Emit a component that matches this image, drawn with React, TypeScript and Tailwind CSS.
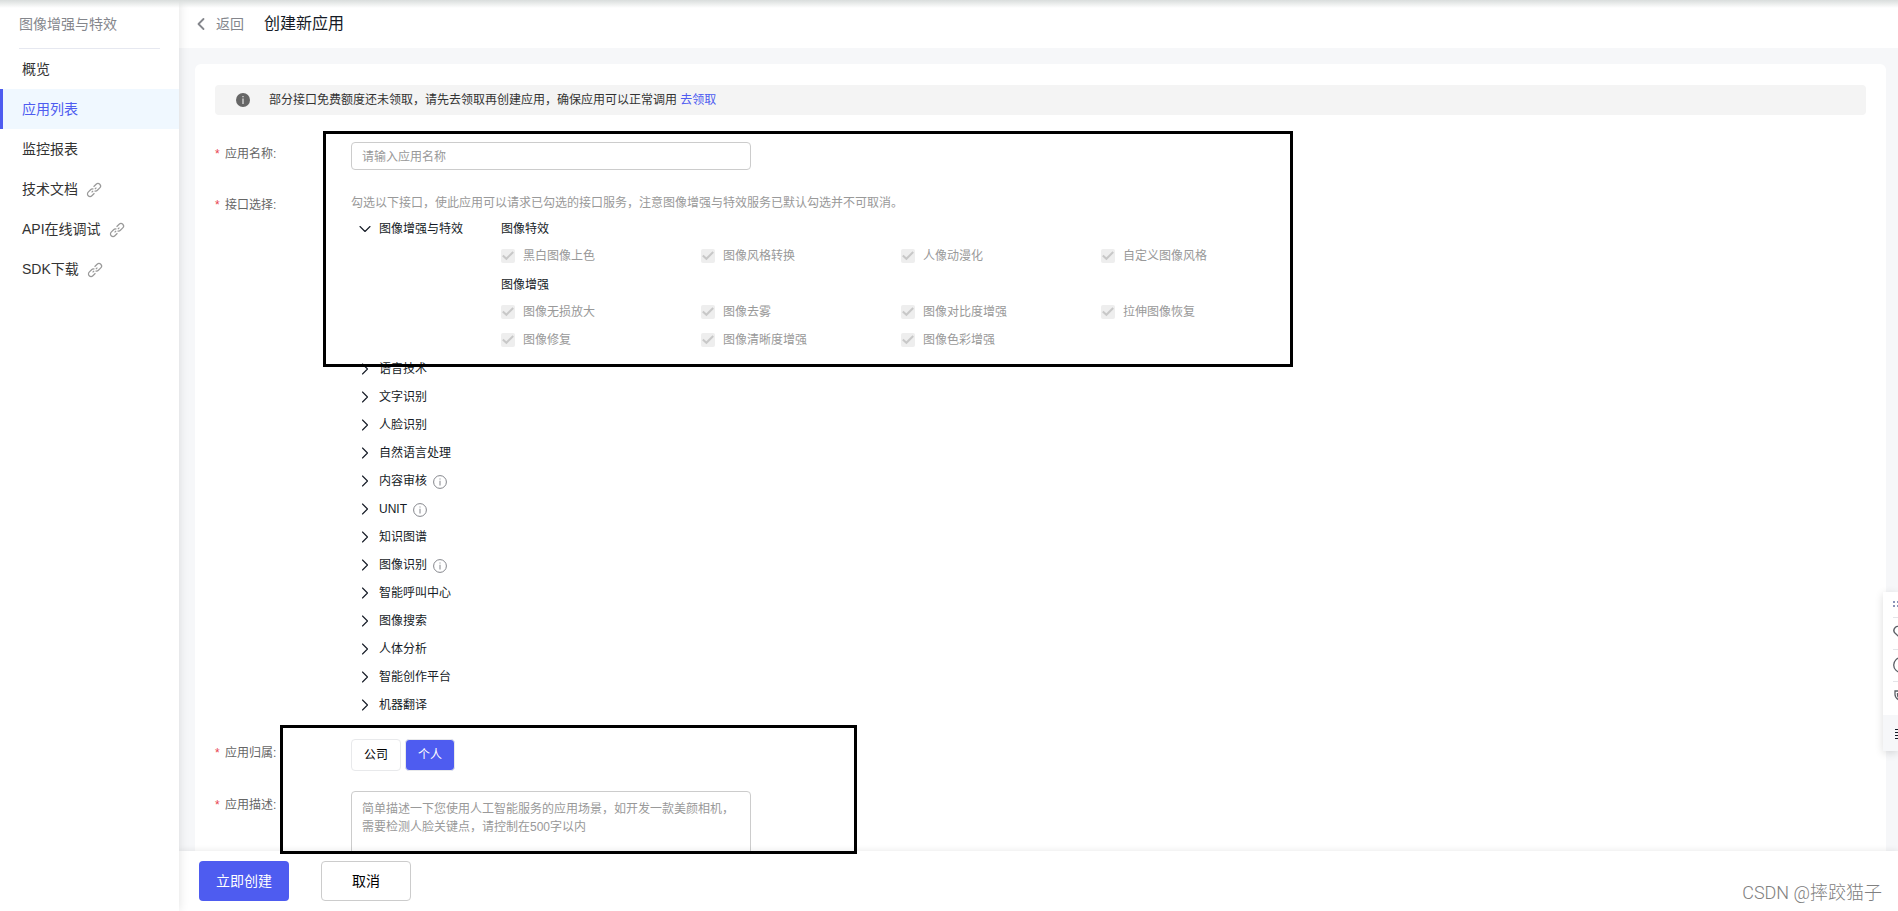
import { useState, type ReactNode } from 'react'
import { ChevronDown, ChevronLeft, ChevronRight } from 'lucide-react'
import clsx from 'clsx'

const menu = [
  { label: '概览' },
  { label: '应用列表', active: true },
  { label: '监控报表' },
  { label: '技术文档', external: true },
  { label: 'API在线调试', external: true },
  { label: 'SDK下载', external: true },
]

const effectGroups = [
  {
    title: '图像特效',
    items: ['黑白图像上色', '图像风格转换', '人像动漫化', '自定义图像风格'],
  },
  {
    title: '图像增强',
    items: [
      '图像无损放大',
      '图像去雾',
      '图像对比度增强',
      '拉伸图像恢复',
      '图像修复',
      '图像清晰度增强',
      '图像色彩增强',
    ],
  },
]

const services = [
  { label: '语音技术' },
  { label: '文字识别' },
  { label: '人脸识别' },
  { label: '自然语言处理' },
  { label: '内容审核', info: true },
  { label: 'UNIT', info: true },
  { label: '知识图谱' },
  { label: '图像识别', info: true },
  { label: '智能呼叫中心' },
  { label: '图像搜索' },
  { label: '人体分析' },
  { label: '智能创作平台' },
  { label: '机器翻译' },
]

export default function App() {
  return (
    <div className="relative flex h-screen overflow-hidden bg-[#f6f7f9] font-['Liberation_Sans','Noto_Sans_CJK_SC',sans-serif] text-xs text-[#151b26]">
      <Sidebar />
      <div className="flex min-w-0 flex-1 flex-col">
        <header className="flex h-12 shrink-0 items-center bg-white pb-2 pl-3 pt-2">
          <a href="#" className="flex items-center text-sm text-[#84868c]">
            <ChevronLeft size={20} strokeWidth={2.2} className="mr-[5px]" />
            返回
          </a>
          <h1 className="ml-5 text-base">创建新应用</h1>
        </header>
        <main className="min-h-0 flex-1 overflow-y-auto px-4 pr-3 pt-4 [scrollbar-width:none]">
          <CreateForm />
        </main>
        <footer className="relative flex h-[60px] shrink-0 items-center gap-8 bg-white pl-5 text-sm shadow-[0_-1px_6px_rgba(0,0,0,0.08)]">
          <button type="submit" form="create-app" className="h-10 w-[90px] rounded bg-[#4e5cf0] text-white">
            立即创建
          </button>
          <button type="button" className="h-10 w-[90px] rounded border border-[#ccc] bg-white text-black">
            取消
          </button>
        </footer>
      </div>

      <FloatingTools />

      {/* shadow of the console top bar */}
      <div className="pointer-events-none absolute inset-x-0 top-0 z-20 h-2 bg-linear-to-b from-[#d9dddc] to-transparent" />

      {/* highlighted areas */}
      <div className="pointer-events-none absolute left-[323px] top-[131px] z-20 h-[236px] w-[970px] border-3 border-black" />
      <div className="pointer-events-none absolute left-[280px] top-[725px] z-20 h-[129px] w-[577px] border-3 border-black" />

      <span className="absolute bottom-1 right-4 z-20 font-['Roboto','Noto_Sans_CJK_SC',sans-serif] text-lg font-light text-[#808080]">
        CSDN @摔跤猫子
      </span>
    </div>
  )
}

function Sidebar() {
  return (
    <aside className="z-10 w-[179px] shrink-0 bg-white shadow-[0_0_10px_rgba(0,0,0,0.12)]">
      <h2 className="mx-[19px] h-[49px] border-b border-[#e6e8f0] pt-3.5 text-sm text-[#84868c]">
        图像增强与特效
      </h2>
      <nav className="text-sm">
        {menu.map((item) => (
          <a
            key={item.label}
            href="#"
            className={clsx(
              'flex h-10 items-center border-l-3 pl-[19px]',
              item.active
                ? 'border-[#4e5cf0] bg-[#f0f8ff] text-[#4e5cf0]'
                : 'border-transparent text-[#333]'
            )}
          >
            {item.label}
            {item.external && <LinkIcon />}
          </a>
        ))}
      </nav>
    </aside>
  )
}

function CreateForm() {
  const [owner, setOwner] = useState('个人')

  return (
    <form id="create-app" className="rounded-md bg-white px-5 pb-10 pt-[21px]">
      <div className="flex h-[30px] items-center rounded bg-[#f4f4f4] pl-[21px] text-[#333]">
        <svg width="14" height="14" viewBox="0 0 14 14" className="mr-[19px]">
          <circle cx="7" cy="7" r="7" fill="#666" />
          <path d="M6.5 3h1v1.3h-1zM6.5 5.5h1V11h-1z" fill="#fff" />
        </svg>
        <p>
          部分接口免费额度还未领取，请先去领取再创建应用，确保应用可以正常调用{' '}
          <a href="#" className="text-[#4e5cf0]">
            去领取
          </a>
        </p>
      </div>

      <div className="mt-[27px] flex">
        <FieldLabel htmlFor="app-name">应用名称:</FieldLabel>
        <input
          id="app-name"
          placeholder="请输入应用名称"
          className="h-7 w-[400px] rounded border border-[#ccc] px-2.5 pt-0.5 placeholder:text-[#999]"
        />
      </div>

      <div className="mt-[23px] flex">
        <FieldLabel>接口选择:</FieldLabel>
        <div>
          <p className="mb-0.5 h-5 leading-5 text-[#999]">
            勾选以下接口，使此应用可以请求已勾选的接口服务，注意图像增强与特效服务已默认勾选并不可取消。
          </p>
          <div className="flex">
            <div className="w-[150px]">
              <TreeButton label="图像增强与特效" open />
            </div>
            <div>
              {effectGroups.map((group) => (
                <fieldset key={group.title}>
                  <legend className="h-7 leading-7">{group.title}</legend>
                  <div className="grid grid-cols-[repeat(4,200px)]">
                    {group.items.map((name) => (
                      <LockedCheckbox key={name} label={name} />
                    ))}
                  </div>
                </fieldset>
              ))}
            </div>
          </div>
          {services.map((s) => (
            <TreeButton key={s.label} label={s.label} info={s.info} />
          ))}
        </div>
      </div>

      <div className="mt-5 flex">
        <FieldLabel low>应用归属:</FieldLabel>
        <div className="flex gap-1">
          {['公司', '个人'].map((name) => (
            <button
              key={name}
              type="button"
              aria-pressed={owner === name}
              onClick={() => setOwner(name)}
              className={clsx(
                'h-8 w-[50px] rounded border border-[#e8e9eb]',
                owner === name ? 'bg-[#4e5cf0] text-white' : 'bg-white text-black'
              )}
            >
              {name}
            </button>
          ))}
        </div>
      </div>

      <div className="mt-5 flex">
        <FieldLabel htmlFor="app-desc" low>
          应用描述:
        </FieldLabel>
        <textarea
          id="app-desc"
          placeholder="简单描述一下您使用人工智能服务的应用场景，如开发一款美颜相机，需要检测人脸关键点，请控制在500字以内"
          className="h-[110px] w-[400px] resize-none rounded border border-[#ccc] px-2.5 py-2 leading-[18px] placeholder:text-[#999]"
        />
      </div>
    </form>
  )
}

function FieldLabel({
  htmlFor,
  low,
  children,
}: {
  htmlFor?: string
  low?: boolean
  children: ReactNode
}) {
  return (
    <label
      htmlFor={htmlFor}
      className={clsx(
        'flex w-[136px] shrink-0 leading-[18px] text-[#666]',
        low ? 'pt-[5px]' : 'pt-[3px]'
      )}
    >
      <span className="w-2.5 text-[#e8434f]">*</span>
      {children}
    </label>
  )
}

function TreeButton({ label, open, info }: { label: string; open?: boolean; info?: boolean }) {
  const Chevron = open ? ChevronDown : ChevronRight
  return (
    <button type="button" aria-expanded={!!open} className="flex h-7 items-center pl-1">
      <Chevron size={20} strokeWidth={1.3} className="mr-1" />
      {label}
      {info && (
        <svg width="14" height="14" viewBox="0 0 14 14" className="ml-1.5 mt-0.5">
          <circle cx="7" cy="7" r="6.4" fill="none" stroke="#84868c" />
          <path d="M6.5 3.4h1v1.2h-1zM6.5 5.8h1v4.8h-1z" fill="#84868c" />
        </svg>
      )}
    </button>
  )
}

function LockedCheckbox({ label }: { label: string }) {
  return (
    <label className="flex h-7 items-center gap-2 pb-0.5 text-[#999]">
      <span className="grid size-3.5">
        <input
          type="checkbox"
          defaultChecked
          disabled
          className="col-start-1 row-start-1 size-3.5 appearance-none rounded-xs bg-[#eee]"
        />
        <svg viewBox="0 0 14 14" className="col-start-1 row-start-1 size-3.5">
          <path d="M1.8 6.4 5.4 9.8 12.2 3" fill="none" stroke="#c8c8c8" strokeWidth="2" />
        </svg>
      </span>
      {label}
    </label>
  )
}

function LinkIcon() {
  return (
    <svg
      width="14"
      height="14"
      viewBox="0 0 14 14"
      fill="none"
      stroke="#999"
      strokeWidth="1.2"
      className="ml-[9px] mt-0.5 overflow-visible"
    >
      <g transform="rotate(-45 7 7)">
        <path d="M5 9.6H1.4a2.6 2.6 0 0 1 0-5.2h3.4a2.6 2.6 0 0 1 2.400 1.6" />
        <path d="M9 4.4h3.6a2.6 2.6 0 0 1 0 5.2H9.200A2.6 2.6 0 0 1 6.800 8" />
        <path d="M3.600 7h2.200M8.200 7h2.200" />
      </g>
    </svg>
  )
}

// Tool strip docked past the right edge, only its left side shows.
function FloatingTools() {
  return (
    <div className="absolute right-0 top-[592px] z-10 h-[159px] w-[15px] bg-white shadow-[0_2px_8px_rgba(0,0,0,0.14)]">
      <div className="h-full overflow-hidden pl-2.5">
        <div className="h-[25px] pt-[9px]">
          <svg width="16" height="6" fill="#8a93b8" className="max-w-none">
            <path d="M0 0h2v2H0zM4 0h2v2H4zM0 4h2v2H0zM4 4h2v2H4z" />
          </svg>
        </div>
        <ToolRow>
          <path d="M8 3.2C6.5 1.1 3.8.9 2.2 2.5.5 4.2.5 6.6 2.2 8.3L8 13.5l5.8-5.2c1.7-1.7 1.7-4.1 0-5.8C12.2.9 9.5 1.1 8 3.2z" />
        </ToolRow>
        <ToolRow>
          <circle cx="8" cy="8" r="7.3" />
        </ToolRow>
        <ToolRow>
          <path d="M2 2h12v3.5c0 3-2.500 5-6 6.500-3.500-1.500-6-3.500-6-6.500zM4.500 4v2c0 2 1.500 3 3.500 4" />
        </ToolRow>
        <div className="-ml-2.5 mt-0.5 h-9 bg-[#f6f7f9] pl-3 pt-3.5">
          <svg width="16" height="11" fill="#151b26" className="max-w-none">
            <path d="M0 0h14v1H0zM0 3h14v1H0zM0 6h14v1H0zM0 9h14v1H0z" />
          </svg>
        </div>
      </div>
    </div>
  )
}

function ToolRow({ children }: { children: ReactNode }) {
  return (
    <div className="h-8 border-t border-[#e3e4e8] pt-[7px]">
      <svg
        width="16"
        height="16"
        viewBox="0 0 16 16"
        fill="none"
        stroke="#5c5f66"
        strokeWidth="1.3"
        className="max-w-none"
      >
        {children}
      </svg>
    </div>
  )
}
